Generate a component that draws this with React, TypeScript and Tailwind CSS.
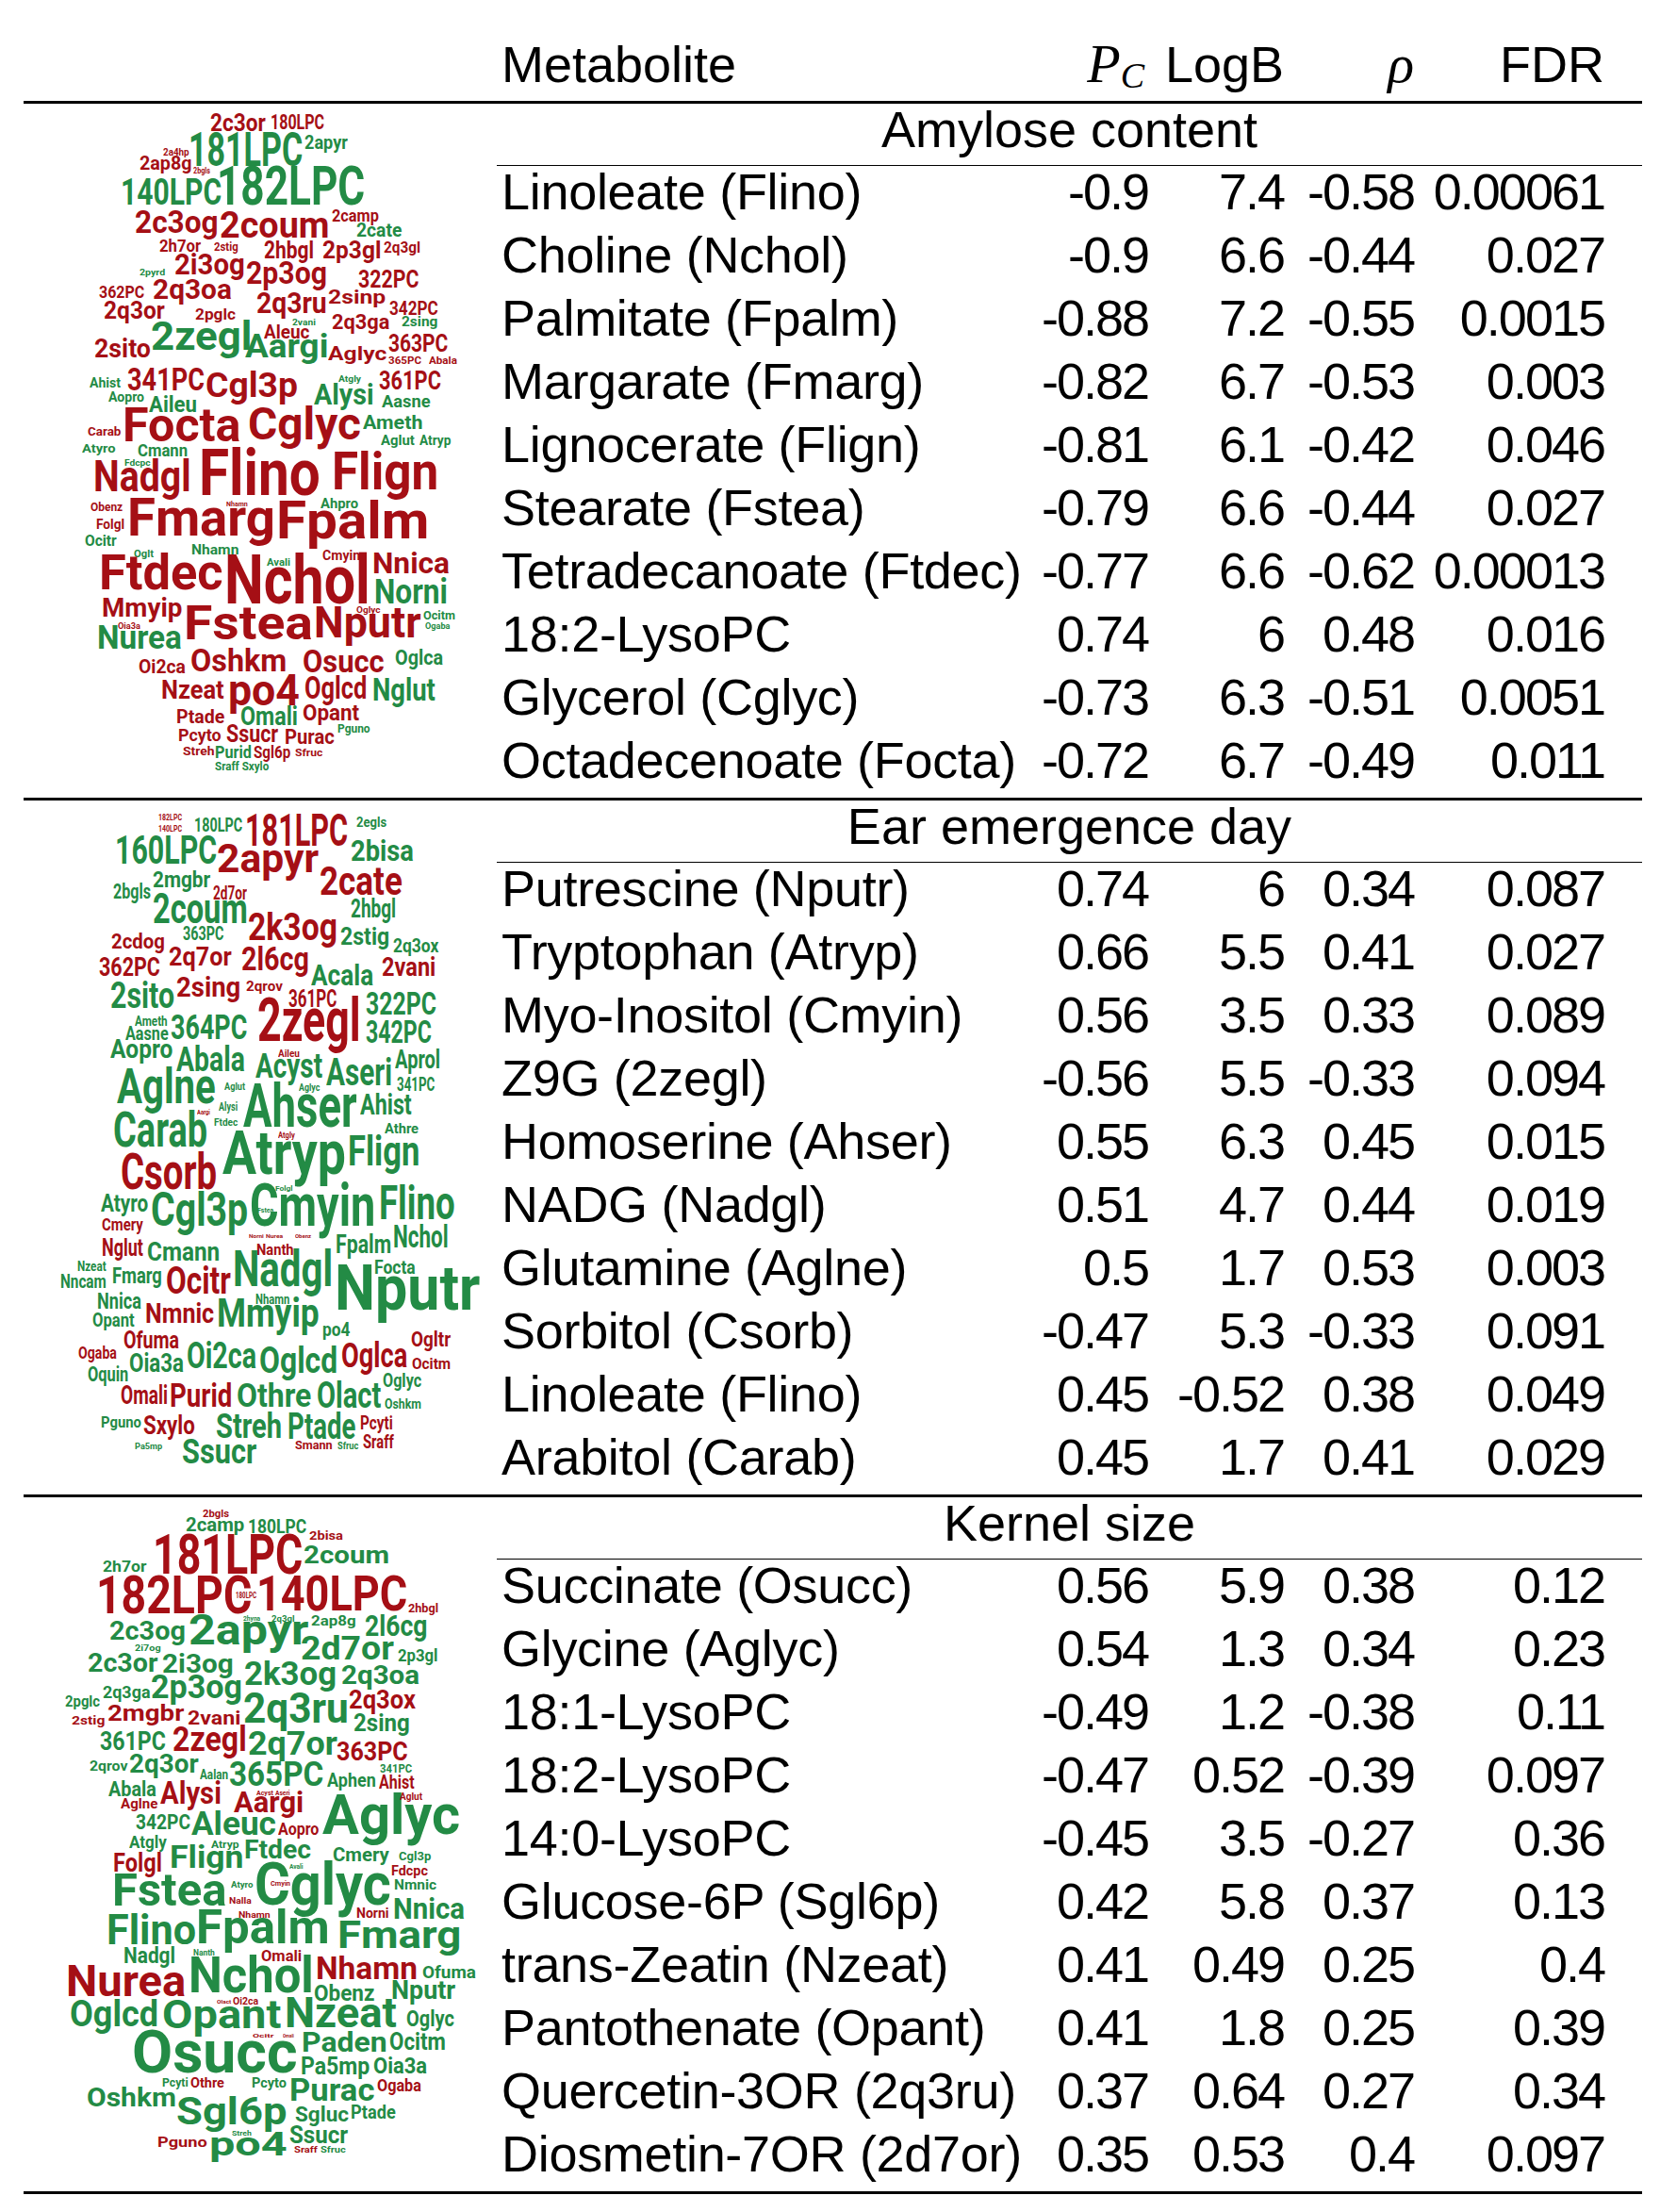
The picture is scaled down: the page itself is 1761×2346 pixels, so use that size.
import { useLayoutEffect, useRef } from 'react';

type Word = [string, number, number, number, number, 'r' | 'g'];
type Row = [string, string, string, string, string];

// page coordinates: text, left, right, cap top, baseline, colour
const cloudAmylose: Word[] = [
  ['2c3or', 223, 282, 121, 139, 'r'], ['180LPC', 287, 344, 121, 137, 'r'],
  ['2a4hp', 173, 201, 157, 165, 'r'], ['181LPC', 200, 321, 141, 176, 'g'],
  ['2apyr', 323, 369, 145, 159, 'g'], ['2ap8g', 148, 203, 167, 181, 'r'],
  ['2bgls', 205, 223, 178, 184, 'r'], ['140LPC', 128, 235, 191, 218, 'g'],
  ['182LPC', 230, 387, 177, 218, 'g'], ['2c3og', 143, 232, 224, 247, 'r'],
  ['2coum', 233, 350, 224, 252, 'r'], ['2camp', 352, 402, 222, 235, 'r'],
  ['2cate', 378, 426, 238, 252, 'g'], ['2h7or', 169, 213, 254, 267, 'r'],
  ['2stig', 227, 253, 258, 267, 'r'], ['2hbgl', 280, 333, 256, 274, 'r'],
  ['2p3gl', 342, 404, 256, 274, 'r'], ['2q3gl', 407, 446, 256, 268, 'r'],
  ['2pyrd', 148, 175, 285, 292, 'g'], ['2i3og', 185, 260, 270, 292, 'r'],
  ['2p3og', 261, 347, 278, 301, 'r'], ['322PC', 380, 444, 287, 305, 'r'],
  ['362PC', 105, 153, 303, 316, 'r'], ['2q3oa', 162, 246, 297, 318, 'r'],
  ['2q3or', 110, 175, 320, 338, 'r'], ['2pglc', 207, 250, 327, 339, 'r'],
  ['2q3ru', 272, 347, 311, 333, 'r'], ['2sinp', 348, 409, 307, 322, 'r'],
  ['342PC', 413, 465, 319, 334, 'r'], ['2q3ga', 352, 413, 333, 349, 'r'],
  ['2vani', 310, 335, 338, 345, 'g'], ['2sing', 426, 464, 336, 347, 'g'],
  ['2sito', 100, 160, 361, 380, 'r'], ['2zegl', 160, 267, 342, 372, 'g'],
  ['Aleuc', 280, 328, 346, 360, 'r'], ['Aargi', 260, 348, 355, 380, 'g'],
  ['Aglyc', 348, 410, 367, 382, 'r'], ['363PC', 412, 475, 355, 373, 'r'],
  ['365PC', 412, 447, 378, 386, 'r'], ['Abala', 455, 485, 378, 386, 'r'],
  ['Ahist', 95, 128, 401, 411, 'g'], ['341PC', 135, 217, 390, 414, 'r'],
  ['Cgl3p', 218, 316, 396, 422, 'r'], ['Atgly', 359, 383, 398, 405, 'g'],
  ['361PC', 402, 468, 394, 414, 'r'], ['Aopro', 115, 153, 416, 426, 'g'],
  ['Aileu', 158, 209, 421, 438, 'g'], ['Alysi', 333, 397, 408, 430, 'g'],
  ['Aasne', 405, 457, 419, 432, 'g'], ['Carab', 93, 128, 454, 463, 'r'],
  ['Focta', 130, 255, 433, 469, 'r'], ['Cglyc', 263, 383, 433, 467, 'r'],
  ['Ameth', 385, 448, 440, 455, 'g'], ['Aglut', 404, 440, 462, 472, 'g'],
  ['Atryp', 445, 478, 462, 472, 'g'], ['Atyro', 87, 123, 472, 481, 'g'],
  ['Cmann', 146, 199, 471, 484, 'g'], ['Fdcpc', 132, 160, 487, 494, 'g'],
  ['Nadgl', 99, 203, 488, 521, 'r'], ['Flino', 211, 340, 477, 526, 'r'],
  ['Flign', 352, 465, 480, 519, 'r'], ['Obenz', 96, 130, 534, 543, 'r'],
  ['Fmarg', 135, 292, 529, 568, 'r'], ['Fpalm', 293, 455, 532, 571, 'r'],
  ['Ahpro', 340, 380, 529, 539, 'g'], ['Nhamn', 240, 263, 532, 537, 'r'],
  ['Folgl', 102, 132, 551, 562, 'r'], ['Ocitr', 90, 124, 567, 579, 'g'],
  ['Nhamn', 203, 253, 578, 588, 'g'], ['Oglt', 142, 163, 583, 591, 'g'],
  ['Cmyin', 342, 382, 584, 595, 'r'], ['Avali', 283, 308, 592, 600, 'g'],
  ['Ftdec', 105, 237, 589, 626, 'r'], ['Nchol', 238, 393, 589, 640, 'r'],
  ['Nnica', 395, 477, 587, 609, 'r'], ['Norni', 397, 475, 615, 641, 'g'],
  ['Mmyip', 108, 193, 635, 655, 'r'], ['Fstea', 195, 332, 643, 678, 'r'],
  ['Nputr', 333, 447, 643, 676, 'r'], ['Oglyc', 378, 403, 644, 650, 'r'],
  ['Ocitm', 449, 483, 649, 658, 'g'], ['Ogaba', 451, 477, 661, 667, 'g'],
  ['Oia3a', 125, 149, 661, 667, 'r'], ['Nurea', 103, 193, 664, 689, 'g'],
  ['Oi2ca', 147, 197, 701, 715, 'r'], ['Oshkm', 202, 304, 689, 712, 'r'],
  ['Osucc', 321, 408, 690, 713, 'r'], ['Oglca', 419, 470, 689, 705, 'g'],
  ['Nzeat', 171, 238, 722, 742, 'r'], ['po4', 242, 318, 715, 748, 'r'],
  ['Oglcd', 323, 389, 718, 741, 'r'], ['Nglut', 395, 462, 720, 743, 'g'],
  ['Ptade', 187, 238, 752, 767, 'r'], ['Omali', 255, 316, 751, 770, 'g'],
  ['Opant', 321, 381, 748, 765, 'r'], ['Pcyto', 189, 235, 773, 786, 'r'],
  ['Ssucr', 240, 295, 769, 787, 'r'], ['Purac', 302, 355, 773, 789, 'r'],
  ['Pguno', 358, 393, 769, 778, 'g'], ['Streh', 194, 227, 793, 802, 'r'],
  ['Purid', 228, 267, 791, 804, 'g'], ['Sgl6p', 269, 308, 791, 804, 'r'],
  ['Sfruc', 313, 342, 794, 802, 'r'], ['Sraff Sxylo', 228, 285, 809, 818, 'g'],
];

const cloudEar: Word[] = [
  ['182LPC', 168, 193, 864, 870, 'r'], ['140LPC', 168, 193, 876, 882, 'r'],
  ['180LPC', 206, 257, 869, 883, 'g'], ['181LPC', 260, 369, 864, 898, 'r'],
  ['2egls', 378, 410, 867, 878, 'g'], ['160LPC', 122, 230, 887, 917, 'g'],
  ['2apyr', 230, 338, 896, 926, 'r'], ['2bisa', 372, 439, 892, 914, 'g'],
  ['2cate', 339, 427, 920, 950, 'r'], ['2mgbr', 162, 223, 925, 942, 'g'],
  ['2bgls', 120, 160, 937, 953, 'g'], ['2d7or', 226, 262, 941, 955, 'r'],
  ['2coum', 162, 263, 949, 980, 'g'], ['2hbgl', 372, 420, 954, 974, 'g'],
  ['2k3og', 263, 358, 968, 997, 'r'], ['2cdog', 118, 175, 990, 1006, 'r'],
  ['363PC', 194, 237, 984, 998, 'g'], ['2stig', 361, 413, 984, 1002, 'g'],
  ['2q7or', 179, 246, 1006, 1025, 'r'], ['2q3ox', 417, 465, 995, 1010, 'g'],
  ['362PC', 105, 170, 1016, 1036, 'r'], ['2l6cg', 256, 328, 1005, 1030, 'r'],
  ['Acala', 330, 396, 1024, 1046, 'g'], ['2vani', 405, 462, 1016, 1036, 'r'],
  ['2sito', 117, 185, 1043, 1070, 'g'], ['2sing', 187, 255, 1037, 1058, 'r'],
  ['2qrov', 261, 300, 1041, 1051, 'r'], ['361PC', 306, 357, 1050, 1068, 'r'],
  ['322PC', 388, 463, 1052, 1076, 'g'], ['2zegl', 273, 383, 1058, 1104, 'r'],
  ['Ameth', 143, 178, 1078, 1088, 'g'], ['364PC', 181, 262, 1077, 1103, 'g'],
  ['342PC', 388, 458, 1082, 1106, 'g'], ['Aasne', 133, 179, 1090, 1104, 'g'],
  ['Aopro', 117, 183, 1104, 1123, 'g'], ['Abala', 187, 260, 1111, 1137, 'g'],
  ['Aileu', 295, 318, 1113, 1121, 'r'], ['Acyst', 271, 342, 1118, 1144, 'g'],
  ['Aseri', 346, 416, 1122, 1151, 'g'], ['Aprol', 419, 467, 1115, 1134, 'g'],
  ['Aglne', 124, 229, 1134, 1171, 'g'], ['Aglut', 238, 260, 1148, 1156, 'g'],
  ['Aglyc', 317, 339, 1149, 1157, 'g'], ['341PC', 421, 461, 1144, 1158, 'g'],
  ['Ahser', 258, 379, 1149, 1195, 'g'], ['Ahist', 382, 437, 1161, 1183, 'g'],
  ['Alysi', 232, 252, 1170, 1179, 'g'], ['Aargi', 209, 223, 1177, 1182, 'r'],
  ['Ftdec', 227, 252, 1186, 1194, 'g'], ['Atgly', 295, 313, 1201, 1207, 'r'],
  ['Carab', 120, 220, 1180, 1217, 'g'], ['Athre', 408, 444, 1192, 1203, 'g'],
  ['Atryp', 236, 367, 1199, 1245, 'g'], ['Flign', 369, 445, 1204, 1236, 'g'],
  ['Csorb', 128, 230, 1223, 1261, 'r'], ['Folgl', 292, 310, 1258, 1263, 'g'],
  ['Atyro', 107, 157, 1267, 1285, 'g'], ['Cgl3p', 160, 263, 1265, 1300, 'g'],
  ['Cmyin', 265, 398, 1255, 1300, 'g'], ['Flino', 402, 483, 1258, 1294, 'g'],
  ['Fstea', 273, 290, 1281, 1286, 'g'], ['Cmery', 108, 152, 1292, 1305, 'r'],
  ['Nglut', 108, 152, 1314, 1332, 'r'], ['Norni', 264, 280, 1310, 1314, 'r'],
  ['Nurea', 282, 300, 1310, 1314, 'r'], ['Obenz', 313, 330, 1310, 1314, 'r'],
  ['Cmann', 156, 233, 1318, 1338, 'g'], ['Nanth', 272, 312, 1319, 1331, 'r'],
  ['Fpalm', 356, 415, 1310, 1330, 'g'], ['Nchol', 417, 476, 1300, 1323, 'g'],
  ['Nadgl', 247, 353, 1326, 1364, 'g'], ['Nzeat', 82, 113, 1338, 1349, 'g'],
  ['Nncam', 64, 113, 1353, 1367, 'g'], ['Fmarg', 119, 172, 1345, 1362, 'g'],
  ['Ocitr', 176, 245, 1343, 1372, 'r'], ['Focta', 397, 441, 1336, 1351, 'g'],
  ['Nputr', 355, 509, 1343, 1390, 'g'], ['Nnica', 103, 150, 1372, 1389, 'g'],
  ['Nhamn', 271, 307, 1373, 1383, 'g'], ['Opant', 98, 143, 1392, 1407, 'g'],
  ['Nmnic', 154, 227, 1383, 1404, 'r'], ['Mmyip', 230, 339, 1378, 1408, 'g'],
  ['po4', 342, 371, 1404, 1418, 'g'], ['Ofuma', 131, 190, 1412, 1430, 'r'],
  ['Ogltr', 436, 478, 1412, 1428, 'r'], ['Ogaba', 83, 124, 1428, 1441, 'r'],
  ['Oia3a', 137, 195, 1436, 1456, 'g'], ['Oi2ca', 198, 272, 1425, 1452, 'g'],
  ['Oglcd', 275, 358, 1430, 1457, 'g'], ['Oglca', 362, 432, 1425, 1451, 'r'],
  ['Ocitm', 437, 478, 1440, 1452, 'r'], ['Oquin', 93, 136, 1449, 1465, 'g'],
  ['Oglyc', 406, 447, 1458, 1472, 'g'], ['Omali', 128, 178, 1471, 1490, 'r'],
  ['Purid', 180, 246, 1468, 1493, 'r'], ['Othre', 251, 330, 1468, 1493, 'g'],
  ['Olact', 336, 404, 1465, 1493, 'g'], ['Oshkm', 408, 447, 1484, 1495, 'g'],
  ['Pguno', 107, 150, 1502, 1514, 'g'], ['Sxylo', 152, 207, 1503, 1522, 'r'],
  ['Streh', 229, 299, 1500, 1526, 'g'], ['Ptade', 305, 377, 1498, 1526, 'g'],
  ['Pcyti', 382, 417, 1503, 1517, 'r'], ['Pa5mp', 143, 172, 1530, 1537, 'g'],
  ['Ssucr', 193, 272, 1527, 1553, 'g'], ['Smann', 313, 353, 1529, 1538, 'r'],
  ['Sfruc', 358, 380, 1529, 1537, 'g'], ['Sraff', 385, 418, 1523, 1537, 'r'],
];

const cloudKernel: Word[] = [
  ['2bgls', 215, 243, 1601, 1609, 'r'], ['2camp', 197, 259, 1611, 1625, 'g'],
  ['180LPC', 263, 325, 1611, 1626, 'g'], ['2bisa', 328, 364, 1625, 1634, 'r'],
  ['181LPC', 162, 321, 1627, 1669, 'r'], ['2coum', 322, 413, 1640, 1658, 'g'],
  ['2h7or', 109, 155, 1655, 1667, 'g'], ['182LPC', 102, 267, 1672, 1711, 'r'],
  ['140LPC', 272, 432, 1672, 1709, 'r'], ['180LPC', 250, 272, 1689, 1695, 'r'],
  ['2hbgl', 433, 465, 1702, 1711, 'r'], ['2hyna', 258, 276, 1714, 1719, 'g'],
  ['2q3gl', 288, 312, 1714, 1720, 'g'], ['2ap8g', 330, 378, 1714, 1725, 'g'],
  ['2l6cg', 387, 453, 1714, 1736, 'g'], ['2c3og', 116, 197, 1721, 1740, 'g'],
  ['2apyr', 200, 328, 1714, 1745, 'g'], ['2d7or', 319, 418, 1736, 1761, 'g'],
  ['2i7og', 143, 170, 1745, 1751, 'g'], ['2p3gl', 422, 465, 1749, 1762, 'g'],
  ['2c3or', 93, 167, 1755, 1774, 'g'], ['2i3og', 172, 248, 1755, 1775, 'g'],
  ['2k3og', 259, 357, 1763, 1788, 'g'], ['2q3oa', 362, 445, 1768, 1787, 'g'],
  ['2q3ga', 109, 159, 1788, 1801, 'g'], ['2p3og', 160, 257, 1777, 1802, 'g'],
  ['2pglc', 69, 106, 1798, 1810, 'g'], ['2q3ru', 258, 370, 1795, 1827, 'g'],
  ['2q3ox', 370, 441, 1793, 1813, 'r'], ['2stig', 76, 112, 1821, 1830, 'r'],
  ['2mgbr', 114, 195, 1809, 1826, 'r'], ['2vani', 199, 255, 1814, 1829, 'r'],
  ['2sing', 375, 435, 1818, 1836, 'g'], ['361PC', 106, 176, 1837, 1857, 'g'],
  ['2zegl', 183, 262, 1832, 1858, 'r'], ['2q7or', 263, 358, 1837, 1862, 'g'],
  ['363PC', 357, 433, 1849, 1868, 'r'], ['2qrov', 95, 135, 1868, 1879, 'g'],
  ['2q3or', 137, 211, 1862, 1881, 'g'], ['Aalan', 212, 242, 1877, 1887, 'g'],
  ['365PC', 243, 343, 1869, 1895, 'g'], ['341PC', 403, 437, 1872, 1881, 'g'],
  ['Abala', 115, 166, 1889, 1905, 'g'], ['Alysi', 170, 235, 1889, 1913, 'r'],
  ['Aphen', 347, 399, 1882, 1896, 'g'], ['Ahist', 402, 440, 1882, 1897, 'r'],
  ['Aargi', 248, 322, 1901, 1923, 'r'], ['Aglne', 128, 167, 1908, 1919, 'r'],
  ['Acyst', 272, 290, 1899, 1904, 'r'], ['Aseri', 292, 308, 1899, 1904, 'r'],
  ['Aglyc', 342, 488, 1903, 1945, 'g'], ['Aglut', 424, 448, 1901, 1909, 'r'],
  ['342PC', 144, 202, 1924, 1940, 'g'], ['Aleuc', 203, 293, 1922, 1947, 'g'],
  ['Aopro', 295, 338, 1933, 1946, 'r'], ['Atgly', 137, 177, 1947, 1960, 'g'],
  ['Atryp', 224, 253, 1952, 1960, 'g'], ['Ftdec', 259, 330, 1953, 1972, 'g'],
  ['Cmery', 353, 413, 1961, 1975, 'g'], ['Cgl3p', 423, 457, 1965, 1974, 'g'],
  ['Folgl', 120, 172, 1967, 1986, 'r'], ['Flign', 180, 258, 1958, 1981, 'g'],
  ['Fdcpc', 415, 454, 1979, 1990, 'r'], ['Avali', 307, 322, 1977, 1982, 'g'],
  ['Cglyc', 270, 415, 1975, 2020, 'g'], ['Nmnic', 418, 463, 1994, 2005, 'g'],
  ['Fstea', 119, 240, 1988, 2022, 'g'], ['Atyro', 245, 268, 1996, 2002, 'g'],
  ['Cmyin', 287, 308, 1995, 2000, 'r'], ['Nalla', 243, 267, 2012, 2019, 'r'],
  ['Nhamn', 253, 287, 2027, 2034, 'r'], ['Norni', 378, 413, 2024, 2034, 'r'],
  ['Nnica', 417, 493, 2014, 2036, 'g'], ['Flino', 113, 208, 2032, 2063, 'g'],
  ['Fpalm', 208, 350, 2026, 2062, 'g'], ['Fmarg', 358, 489, 2037, 2066, 'g'],
  ['Nadgl', 131, 186, 2066, 2083, 'g'], ['Nanth', 205, 228, 2068, 2074, 'g'],
  ['Omali', 277, 320, 2068, 2080, 'r'], ['Nurea', 70, 197, 2084, 2117, 'r'],
  ['Nchol', 200, 333, 2075, 2113, 'g'], ['Nhamn', 335, 443, 2075, 2099, 'r'],
  ['Ofuma', 448, 505, 2085, 2098, 'g'], ['Obenz', 333, 397, 2106, 2123, 'g'],
  ['Nputr', 415, 483, 2101, 2121, 'g'], ['Olact', 230, 245, 2122, 2126, 'r'],
  ['Oi2ca', 247, 274, 2118, 2126, 'r'], ['Oglcd', 74, 168, 2123, 2150, 'g'],
  ['Opant', 172, 298, 2122, 2152, 'g'], ['Nzeat', 302, 421, 2118, 2150, 'g'],
  ['Oglyc', 431, 482, 2133, 2150, 'g'], ['Ocitr', 268, 290, 2158, 2162, 'r'],
  ['Omali', 300, 312, 2158, 2162, 'r'], ['Paden', 320, 411, 2156, 2177, 'g'],
  ['Ocitm', 413, 473, 2156, 2174, 'g'], ['Osucc', 140, 316, 2153, 2198, 'g'],
  ['Pa5mp', 319, 392, 2182, 2200, 'g'], ['Oia3a', 396, 453, 2183, 2200, 'g'],
  ['Pcyti', 172, 200, 2205, 2214, 'g'], ['Othre', 202, 238, 2204, 2214, 'r'],
  ['Pcyto', 267, 304, 2204, 2214, 'g'], ['Oshkm', 92, 187, 2215, 2235, 'g'],
  ['Purac', 307, 397, 2205, 2228, 'g'], ['Ogaba', 400, 447, 2205, 2218, 'r'],
  ['Sgl6p', 187, 305, 2224, 2253, 'g'], ['Sgluc', 313, 370, 2234, 2250, 'g'],
  ['Ptade', 372, 420, 2234, 2248, 'g'], ['Streh', 246, 267, 2260, 2265, 'g'],
  ['Ssucr', 307, 369, 2255, 2273, 'g'], ['Pguno', 167, 220, 2267, 2278, 'r'],
  ['po4', 222, 305, 2262, 2287, 'g'], ['Sraff', 312, 337, 2276, 2283, 'r'],
  ['Sfruc', 340, 367, 2276, 2283, 'g'],
];

const sections: { title: string; top: number; words: Word[]; rows: Row[] }[] = [
  {
    title: 'Amylose content',
    top: 110,
    words: cloudAmylose,
    rows: [
      ['Linoleate (Flino)', '-0.9', '7.4', '-0.58', '0.00061'],
      ['Choline (Nchol)', '-0.9', '6.6', '-0.44', '0.027'],
      ['Palmitate (Fpalm)', '-0.88', '7.2', '-0.55', '0.0015'],
      ['Margarate (Fmarg)', '-0.82', '6.7', '-0.53', '0.003'],
      ['Lignocerate (Flign)', '-0.81', '6.1', '-0.42', '0.046'],
      ['Stearate (Fstea)', '-0.79', '6.6', '-0.44', '0.027'],
      ['Tetradecanoate (Ftdec)', '-0.77', '6.6', '-0.62', '0.00013'],
      ['18:2-LysoPC', '0.74', '6', '0.48', '0.016'],
      ['Glycerol (Cglyc)', '-0.73', '6.3', '-0.51', '0.0051'],
      ['Octadecenoate (Focta)', '-0.72', '6.7', '-0.49', '0.011'],
    ],
  },
  {
    title: 'Ear emergence day',
    top: 849,
    words: cloudEar,
    rows: [
      ['Putrescine (Nputr)', '0.74', '6', '0.34', '0.087'],
      ['Tryptophan (Atryp)', '0.66', '5.5', '0.41', '0.027'],
      ['Myo-Inositol (Cmyin)', '0.56', '3.5', '0.33', '0.089'],
      ['Z9G (2zegl)', '-0.56', '5.5', '-0.33', '0.094'],
      ['Homoserine (Ahser)', '0.55', '6.3', '0.45', '0.015'],
      ['NADG (Nadgl)', '0.51', '4.7', '0.44', '0.019'],
      ['Glutamine (Aglne)', '0.5', '1.7', '0.53', '0.003'],
      ['Sorbitol (Csorb)', '-0.47', '5.3', '-0.33', '0.091'],
      ['Linoleate (Flino)', '0.45', '-0.52', '0.38', '0.049'],
      ['Arabitol (Carab)', '0.45', '1.7', '0.41', '0.029'],
    ],
  },
  {
    title: 'Kernel size',
    top: 1588,
    words: cloudKernel,
    rows: [
      ['Succinate (Osucc)', '0.56', '5.9', '0.38', '0.12'],
      ['Glycine (Aglyc)', '0.54', '1.3', '0.34', '0.23'],
      ['18:1-LysoPC', '-0.49', '1.2', '-0.38', '0.11'],
      ['18:2-LysoPC', '-0.47', '0.52', '-0.39', '0.097'],
      ['14:0-LysoPC', '-0.45', '3.5', '-0.27', '0.36'],
      ['Glucose-6P (Sgl6p)', '0.42', '5.8', '0.37', '0.13'],
      ['trans-Zeatin (Nzeat)', '0.41', '0.49', '0.25', '0.4'],
      ['Pantothenate (Opant)', '0.41', '1.8', '0.25', '0.39'],
      ['Quercetin-3OR (2q3ru)', '0.37', '0.64', '0.27', '0.34'],
      ['Diosmetin-7OR (2d7or)', '0.35', '0.53', '0.4', '0.097'],
    ],
  },
];

function CloudWord({ word, offsetY }: { word: Word; offsetY: number }) {
  const ref = useRef<HTMLSpanElement>(null);
  const [text, x0, x1, capTop, baseline, colour] = word;
  const size = (baseline - capTop) / 0.711;

  // squeeze each word to the width it has in the cloud
  useLayoutEffect(() => {
    const el = ref.current;
    if (!el) return;
    const fit = () => {
      const natural = el.offsetWidth;
      if (natural > 0) el.style.transform = `scaleX(${(x1 - x0) / natural})`;
    };
    fit();
    document.fonts?.ready.then(fit);
  }, [x0, x1]);

  return (
    <span
      ref={ref}
      className={`absolute whitespace-nowrap font-bold leading-none origin-left ${
        colour === 'r' ? 'text-[#a50f15]' : 'text-[#238b45]'
      }`}
      style={{ left: x0, top: baseline - 0.842 * size - offsetY, fontSize: size }}
    >
      {text}
    </span>
  );
}

function Rule() {
  return <div className="ml-[25px] h-[3px] w-[1717px] bg-black" />;
}

const grid = 'grid grid-cols-[568px_118px_144px_138px_202px] pl-[5px]';
const num = 'text-right tracking-[-2px]';

export default function App() {
  return (
    <div className="h-[2346px] w-[1761px] bg-white font-['Liberation_Sans',Arial,sans-serif] text-[54px] text-black">
      <div className="flex h-[107px] pt-[41px]">
        <div className="w-[527px]" />
        <div className={`${grid} h-[54px] leading-[54px] whitespace-nowrap`}>
          <span>Metabolite</span>
          <span className="pr-[4px] text-right font-['Liberation_Serif',serif] text-[58px] italic">
            P<span className="relative top-[6px] text-[38px]">C</span>
          </span>
          <span className="text-right">LogB</span>
          <span className="text-right font-['Liberation_Serif',serif] text-[58px] italic">ρ</span>
          <span className="text-right">FDR</span>
        </div>
      </div>
      <Rule />
      {sections.map((s) => (
        <div key={s.title}>
          <div className="flex h-[736px]">
            <div className="relative w-[527px] font-['Roboto',sans-serif]">
              {s.words.map((w, j) => (
                <CloudWord key={j} word={w} offsetY={s.top} />
              ))}
            </div>
            <div className="flex w-[1215px] flex-col">
              <div className="h-[54px] text-center leading-[54px]">{s.title}</div>
              <div className="mt-[11px] h-[3px] bg-black" />
              <div>
                {s.rows.map((r, k) => (
                  <div key={k} className={`${grid} h-[67px] leading-[54px] whitespace-nowrap`}>
                    <span className="tracking-[-0.3px]">{r[0]}</span>
                    <span className={num}>{r[1]}</span>
                    <span className={num}>{r[2]}</span>
                    <span className={num}>{r[3]}</span>
                    <span className={num}>{r[4]}</span>
                  </div>
                ))}
              </div>
            </div>
          </div>
          <Rule />
        </div>
      ))}
    </div>
  );
}
